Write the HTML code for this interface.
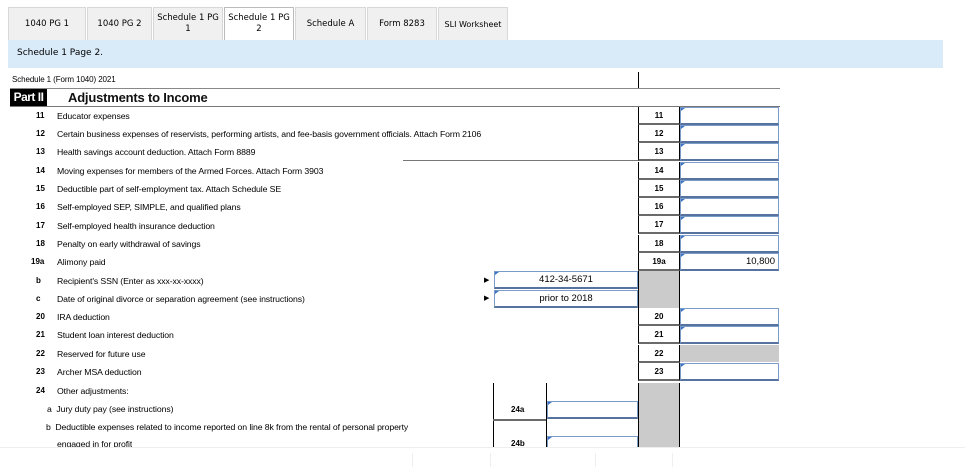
<!DOCTYPE html>
<html><head><style>
body{margin:0;width:965px;height:467px;background:#fff;position:relative;overflow:hidden;font-family:"Liberation Sans",Arial,sans-serif;}
.a{position:absolute}
.tab{position:absolute;top:7px;height:33px;background:#f0f0f0;border:1px solid #d8d8d8;border-bottom:none;font-family:"DejaVu Sans",sans-serif;font-size:8.5px;color:#000;text-align:center;display:flex;align-items:center;justify-content:center;line-height:11px;box-sizing:border-box}
.lt{position:absolute;font-size:8.7px;color:#000;white-space:nowrap;line-height:10px;letter-spacing:-0.1px}
.n{position:absolute;font-size:8px;font-weight:bold;white-space:nowrap;line-height:10px}
.nc{position:absolute;left:638px;width:42px;height:18px;border-left:1px solid #000;border-right:1px solid #000;border-bottom:2px solid #6a6a6a;box-sizing:border-box;font-size:8px;font-weight:bold;text-align:center;line-height:17px}
.in{position:absolute;height:18px;border:1px solid #7b9bc8;border-bottom:2px solid #56729e;box-sizing:border-box;font-size:9.5px;line-height:15px;background:#fff}
.in:before{content:"";position:absolute;left:0;top:0;border-left:4px solid #3c73c4;border-bottom:3px solid transparent}
.g{position:absolute;background:#cbcbcb}
</style></head><body>
<div class="tab" style="left:8px;width:78px">1040 PG 1</div>
<div class="tab" style="left:87px;width:65px">1040 PG 2</div>
<div class="tab" style="left:153px;width:70px">Schedule 1 PG<br>1</div>
<div class="tab" style="left:224px;width:70px;background:#fff;border-color:#bbb">Schedule 1 PG<br>2</div>
<div class="tab" style="left:295px;width:71px">Schedule A</div>
<div class="tab" style="left:367px;width:70px">Form 8283</div>
<div class="tab" style="left:438px;width:70px;font-size:8px">SLI Worksheet</div>
<div class="a" style="left:8px;top:40px;width:935px;height:28px;background:#d9eaf8"></div>
<div class="a" style="left:17px;top:48px;font-family:'DejaVu Sans',sans-serif;font-size:9px">Schedule 1 Page 2.</div>
<div class="lt" style="left:12px;top:75px;font-size:8px">Schedule 1 (Form 1040) 2021</div>
<div class="a" style="left:638px;top:72px;width:1px;height:16px;background:#000"></div>
<div class="a" style="left:10px;top:88px;width:770px;height:1px;background:#888"></div>
<div class="a" style="left:10px;top:89px;width:37px;height:17px;background:#000;color:#fff;font-weight:bold;font-size:12px;line-height:17px;text-align:center;letter-spacing:-0.5px">Part II</div>
<div class="a" style="left:68px;top:89px;font-weight:bold;font-size:13px;line-height:17px;color:#111;letter-spacing:-0.2px">Adjustments to Income</div>
<div class="a" style="left:10px;top:106px;width:770px;height:1px;background:#777"></div>
<div class="a" style="left:403px;top:160px;width:235px;height:1px;background:#777"></div>

<div class="n" style="left:36px;top:111px">11</div><div class="lt" style="left:57px;top:111px">Educator expenses</div>
<div class="n" style="left:36px;top:129px">12</div><div class="lt" style="left:57px;top:129px">Certain business expenses of reservists, performing artists, and fee-basis government officials. Attach Form 2106</div>
<div class="n" style="left:36px;top:147px">13</div><div class="lt" style="left:57px;top:147px">Health savings account deduction. Attach Form 8889</div>
<div class="n" style="left:36px;top:166px">14</div><div class="lt" style="left:57px;top:166px">Moving expenses for members of the Armed Forces. Attach Form 3903</div>
<div class="n" style="left:36px;top:184px">15</div><div class="lt" style="left:57px;top:184px">Deductible part of self-employment tax. Attach Schedule SE</div>
<div class="n" style="left:36px;top:202px">16</div><div class="lt" style="left:57px;top:202px">Self-employed SEP, SIMPLE, and qualified plans</div>
<div class="n" style="left:36px;top:221px">17</div><div class="lt" style="left:57px;top:221px">Self-employed health insurance deduction</div>
<div class="n" style="left:36px;top:239px">18</div><div class="lt" style="left:57px;top:239px">Penalty on early withdrawal of savings</div>
<div class="n" style="left:31px;top:257px">19a</div><div class="lt" style="left:57px;top:257px">Alimony paid</div>
<div class="n" style="left:36px;top:276px">b</div><div class="lt" style="left:57px;top:276px">Recipient's SSN (Enter as xxx-xx-xxxx)</div>
<div class="n" style="left:36px;top:294px">c</div><div class="lt" style="left:57px;top:294px">Date of original divorce or separation agreement (see instructions)</div>
<div class="n" style="left:36px;top:312px">20</div><div class="lt" style="left:57px;top:312px">IRA deduction</div>
<div class="n" style="left:36px;top:330px">21</div><div class="lt" style="left:57px;top:330px">Student loan interest deduction</div>
<div class="n" style="left:36px;top:349px">22</div><div class="lt" style="left:57px;top:349px">Reserved for future use</div>
<div class="n" style="left:36px;top:367px">23</div><div class="lt" style="left:57px;top:367px">Archer MSA deduction</div>
<div class="n" style="left:36px;top:386px">24</div><div class="lt" style="left:57px;top:386px">Other adjustments:</div>
<div class="lt" style="left:47px;top:404px">a&nbsp;&nbsp;Jury duty pay (see instructions)</div>
<div class="lt" style="left:46px;top:422px">b&nbsp;&nbsp;Deductible expenses related to income reported on line 8k from the rental of personal property</div>
<div class="lt" style="left:57px;top:439px;height:8px;overflow:hidden">engaged in for profit</div>

<div class="nc" style="top:107px">11</div><div class="in" style="left:680px;top:107px;width:99px"></div>
<div class="nc" style="top:125px">12</div><div class="in" style="left:680px;top:125px;width:99px"></div>
<div class="nc" style="top:143px">13</div><div class="in" style="left:680px;top:143px;width:99px"></div>
<div class="nc" style="top:162px">14</div><div class="in" style="left:680px;top:162px;width:99px"></div>
<div class="nc" style="top:180px">15</div><div class="in" style="left:680px;top:180px;width:99px"></div>
<div class="nc" style="top:198px">16</div><div class="in" style="left:680px;top:198px;width:99px"></div>
<div class="nc" style="top:216px">17</div><div class="in" style="left:680px;top:216px;width:99px"></div>
<div class="nc" style="top:235px">18</div><div class="in" style="left:680px;top:235px;width:99px"></div>
<div class="nc" style="top:253px">19a</div><div class="in" style="left:680px;top:253px;width:99px;text-align:right;padding-right:3px">10,800</div>
<div class="g" style="left:638px;top:271px;width:42px;height:37px;border-left:1px solid #000;border-right:1px solid #000;box-sizing:border-box"></div>
<div class="lt" style="left:484px;top:276px;font-size:7px">&#9654;</div>
<div class="lt" style="left:484px;top:294px;font-size:7px">&#9654;</div>
<div class="in" style="left:494px;top:271px;width:144px;text-align:center">412-34-5671</div>
<div class="in" style="left:494px;top:290px;width:144px;text-align:center">prior to 2018</div>
<div class="nc" style="top:308px">20</div><div class="in" style="left:680px;top:308px;width:99px"></div>
<div class="nc" style="top:326px">21</div><div class="in" style="left:680px;top:326px;width:99px"></div>
<div class="nc" style="top:345px">22</div><div class="g" style="left:680px;top:345px;width:99px;height:17px"></div>
<div class="nc" style="top:363px">23</div><div class="in" style="left:680px;top:363px;width:99px"></div>
<div class="g" style="left:638px;top:383px;width:42px;height:64px;border-left:1px solid #000;border-right:1px solid #000;box-sizing:border-box"></div>
<div class="a" style="left:493px;top:383px;width:1px;height:64px;background:#000"></div>
<div class="a" style="left:546px;top:383px;width:1px;height:64px;background:#000"></div>
<div class="a" style="left:493px;top:419px;width:53px;height:2px;background:#6a6a6a"></div>
<div class="n" style="left:511px;top:405px">24a</div>
<div class="n" style="left:511px;top:439px">24b</div>
<div class="in" style="left:547px;top:401px;width:91px"></div>
<div class="in" style="left:547px;top:436px;width:91px"></div>
<div class="a" style="left:0;top:447px;width:965px;height:20px;background:#fff;border-top:1px solid #eee"></div>
<div class="a" style="left:412px;top:453px;width:1px;height:14px;background:#eee"></div>
<div class="a" style="left:490px;top:453px;width:1px;height:14px;background:#eee"></div>
<div class="a" style="left:595px;top:453px;width:1px;height:14px;background:#eee"></div>
<div class="a" style="left:672px;top:453px;width:1px;height:14px;background:#eee"></div>
</body></html>
